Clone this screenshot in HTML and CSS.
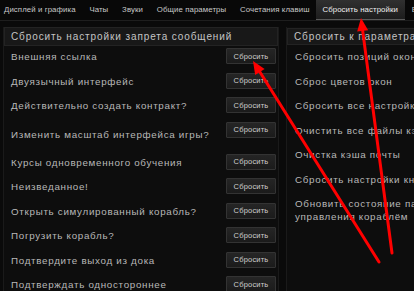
FILE: index.html
```html
<!DOCTYPE html>
<html lang="ru">
<head>
    <meta charset="UTF-8">
    <meta name="viewport" content="width=device-width, initial-scale=1.0">
    <title>Сбросить настройки</title>
    <link rel="stylesheet" href="styles.css">
</head>
<body>

    <div class="tabs">
        <span class="tab">Дисплей и графика</span>
        <span class="tab">Чаты</span>
        <span class="tab">Звуки</span>
        <span class="tab">Общие параметры</span>
        <span class="tab">Сочетания клавиш</span>
        <span class="tab active">Сбросить настройки</span>
        <span class="tab">Вид</span>
    </div>

    <div class="content">
        <section class="panel left">
            <div class="panel-head">Сбросить настройки запрета сообщений</div>

            <div class="row"><span class="label">Внешняя ссылка</span><button>Сбросить</button></div>
            <div class="row"><span class="label">Двуязычный интерфейс</span><button>Сбросить</button></div>
            <div class="row"><span class="label">Действительно создать контракт?</span><button>Сбросить</button></div>
            <div class="row tall"><span class="label">Изменить масштаб интерфейса игры?</span><button>Сбросить</button></div>
            <div class="row"><span class="label">Курсы одновременного обучения</span><button>Сбросить</button></div>
            <div class="row"><span class="label">Неизведанное!</span><button>Сбросить</button></div>
            <div class="row"><span class="label">Открыть симулированный корабль?</span><button>Сбросить</button></div>
            <div class="row"><span class="label">Погрузить корабль?</span><button>Сбросить</button></div>
            <div class="row"><span class="label">Подтвердите выход из дока</span><button>Сбросить</button></div>
            <div class="row"><span class="label">Подтверждать одностороннее<br>изменение</span><button>Сбросить</button></div>
        </section>

        <section class="panel right">
            <div class="panel-head">Сбросить к параметрам по умолчанию</div>

            <div class="row"><span class="label">Сбросить позиций окон</span></div>
            <div class="row"><span class="label">Сброс цветов окон</span></div>
            <div class="row"><span class="label">Сбросить все настройки</span></div>
            <div class="row"><span class="label">Очистить все файлы кэша</span></div>
            <div class="row"><span class="label">Очистка кэша почты</span></div>
            <div class="row"><span class="label">Сбросить настройки кнопок</span></div>
            <div class="row"><span class="label">Обновить состояние панели управления кораблём</span></div>
        </section>
    </div>

    <!-- red markup arrows on top of the screenshot -->
    <svg class="arrows" width="414" height="291" viewBox="0 0 414 291">
        <line x1="379" y1="262" x2="259.9" y2="72" stroke="#ff0000" stroke-width="3" stroke-linecap="round"/>
        <polygon points="253,61 264.6,69.1 255.2,75" fill="#ff0000"/>
        <line x1="392" y1="253" x2="362.7" y2="30.9" stroke="#ff0000" stroke-width="3" stroke-linecap="round"/>
        <polygon points="361,18 368.2,30.2 357.2,31.6" fill="#ff0000"/>
    </svg>

</body>
</html>
```

FILE: styles.css
```css
body {
    margin: 0;
    width: 414px;
    height: 291px;
    overflow: hidden;
    position: relative;
    background: #0a0a0a;
    font-family: "Liberation Sans", Arial, sans-serif;
    color: #b4b4b4;
}
.tabs {
    display: flex;
    height: 20px;
    background: #080808;
    border-bottom: 1px solid #1e1e1e;
    white-space: nowrap;
}
.tab {
    font-size: 7.8px;
    letter-spacing: 0.1px;
    line-height: 19px;
    padding: 0 6.9px;
    color: #c8c8c8;
}
.tab:first-child {
    padding-left: 4px;
}
.tab.active {
    padding: 0 7px 0 6px;
    color: #eeeeee;
    background: linear-gradient(#303030, #1c1c1c);
    box-shadow: inset 0 -1px 0 #5a5a5a;
}
.content {
    display: flex;
    gap: 7px;
    padding: 6px 0 0 3px;
}
.panel {
    flex: none;
    background: #0d0d0d;
    height: 290px;
}
.panel.left {
    width: 274px;
    border: 1px solid #1a1a1a;
    border-top: none;
}
.panel.right {
    width: 200px;
    border-left: 1px solid #1a1a1a;
}
.panel-head {
    height: 17px;
    line-height: 17px;
    padding-left: 6px;
    font-size: 10px;
    letter-spacing: 0.9px;
    color: #c4c4c4;
    background: #181818;
    border: 1px solid #232323;
    white-space: nowrap;
    overflow: hidden;
}
.panel.right .panel-head {
    height: 15px;
    line-height: 15px;
    margin-top: 1px;
}
.row {
    display: flex;
    justify-content: space-between;
    align-items: flex-start;
    height: 24.5px;
    padding: 2px 2px 0 7px;
    box-sizing: border-box;
}
.row.tall {
    height: 32px;
}
.row.tall .label {
    padding-top: 6px;
}
.label {
    font-size: 9.8px;
    letter-spacing: 0.7px;
    line-height: 13px;
    padding-top: 2px;
    color: #b8b8b8;
}
.panel.right .row {
    padding-left: 8px;
    padding-top: 3px;
}
.panel.right .label {
    width: 150px;
}
button {
    flex: none;
    width: 50px;
    height: 16px;
    padding: 0;
    font-family: "Liberation Sans", Arial, sans-serif;
    font-size: 7.5px;
    letter-spacing: 0.2px;
    color: #cfcfcf;
    background: linear-gradient(#252525, #1b1b1b);
    border: 1px solid #333333;
    border-radius: 1px;
}
.arrows {
    position: absolute;
    left: 0;
    top: 0;
}
```
